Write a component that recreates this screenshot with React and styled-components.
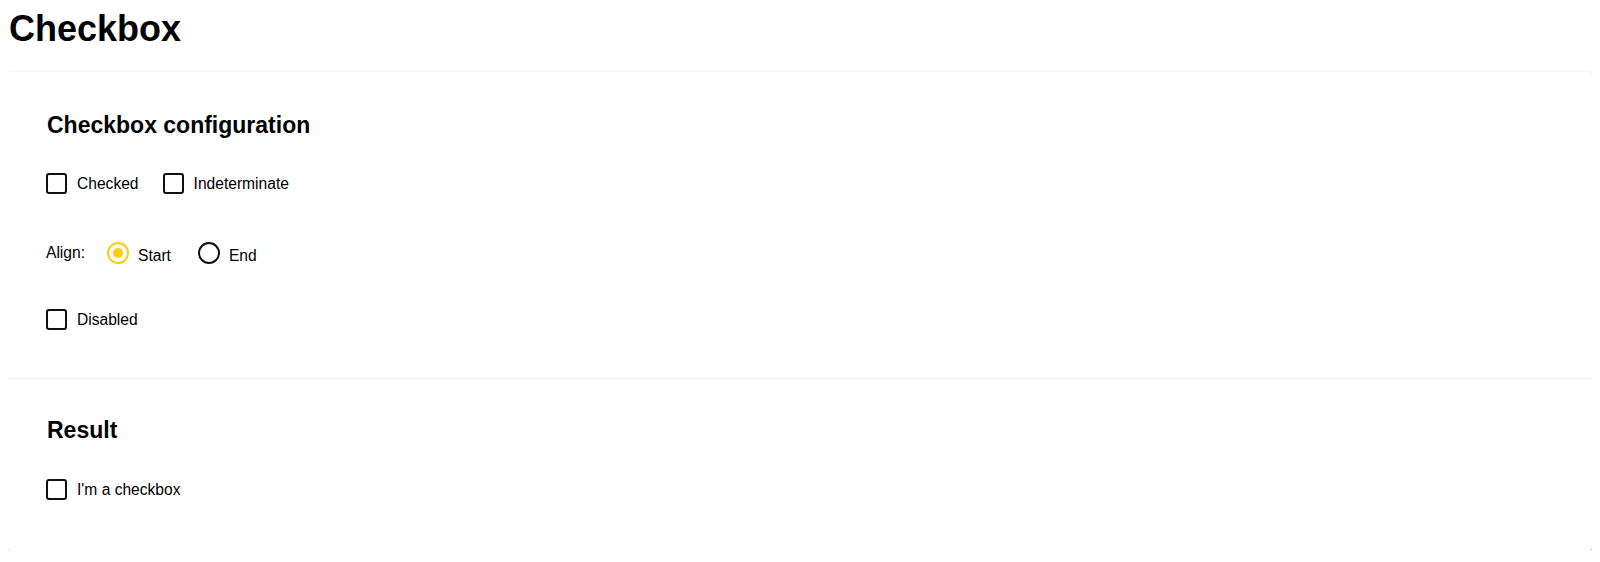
import React, { useState } from 'react';
import styled, { createGlobalStyle } from 'styled-components';

const GlobalStyle = createGlobalStyle`
  body {
    margin: 8px;
    font-family: "Liberation Sans", Arial, Helvetica, sans-serif;
    color: #000;
    background: #fff;
  }
`;

const Title = styled.h1`
  font-size: 36px;
  line-height: 41px;
  font-weight: bold;
  margin: 0 0 23px 1px;
`;

const Card = styled.div`
  background: #fff;
  border-radius: 2px;
  box-shadow: 1px 1px 1px rgba(0, 0, 0, 0.28), 0 1px 3px rgba(0, 0, 0, 0.22),
    0 0 2px rgba(0, 0, 0, 0.06);
`;

const Section = styled.section`
  padding: ${(props) => props.pad};
  border-top: ${(props) => (props.divided ? '1px solid #f0f0f0' : 'none')};
`;

const SectionTitle = styled.h2`
  font-size: 23px;
  line-height: 26px;
  font-weight: bold;
  margin: 0 0 ${(props) => props.after || 35}px 1px;
`;

const Row = styled.div`
  display: flex;
  align-items: center;
  gap: ${(props) => props.gap || 24}px;
  margin-bottom: ${(props) => props.spacing || 0}px;
`;

const CheckLabel = styled.label`
  display: flex;
  align-items: center;
  gap: 10px;
  font-size: 15.6px;
  cursor: pointer;
  user-select: none;
`;

const Box = styled.span`
  width: 21px;
  height: 21px;
  box-sizing: border-box;
  border: 2px solid #111;
  border-radius: 3px;
  display: flex;
  align-items: center;
  justify-content: center;
  background: #fff;
`;

const Mark = styled.span`
  width: 9px;
  height: 2px;
  background: #111;
`;

const AlignText = styled.span`
  font-size: 15.6px;
`;

const RadioLabel = styled.label`
  display: flex;
  align-items: center;
  gap: 9px;
  font-size: 15.6px;
  cursor: pointer;
  user-select: none;
`;

const RadioText = styled.span`
  padding-top: 6px;
`;

const Ring = styled.span`
  width: 22px;
  height: 22px;
  box-sizing: border-box;
  border-radius: 50%;
  border: 2px solid ${(props) => (props.on ? '#fdcc0d' : '#111')};
  display: flex;
  align-items: center;
  justify-content: center;
`;

const Dot = styled.span`
  width: 10px;
  height: 10px;
  border-radius: 50%;
  background: #fdcc0d;
`;

const Checkbox = ({ label, checked, indeterminate, onToggle }) => (
  <CheckLabel onClick={onToggle}>
    <Box>
      {indeterminate ? <Mark /> : null}
      {checked && !indeterminate ? (
        <svg width="13" height="13" viewBox="0 0 13 13">
          <path d="M2 6.5l3 3 6-6" fill="none" stroke="#111" strokeWidth="2" />
        </svg>
      ) : null}
    </Box>
    <span>{label}</span>
  </CheckLabel>
);

const Radio = ({ label, on, onPick }) => (
  <RadioLabel onClick={onPick}>
    <Ring on={on}>{on ? <Dot /> : null}</Ring>
    <RadioText>{label}</RadioText>
  </RadioLabel>
);

const App = () => {
  const [align, setAlign] = useState('start');

  return (
    <>
      <GlobalStyle />
      <Title>Checkbox</Title>
      <Card>
        <Section pad="40px 38px 48px">
          <SectionTitle>Checkbox configuration</SectionTitle>
          <Row spacing={47}>
            <Checkbox label="Checked" />
            <Checkbox label="Indeterminate" />
          </Row>
          <Row spacing={44} gap={22}>
            <AlignText>Align:</AlignText>
            <Row gap={27}>
              <Radio label="Start" on={align === 'start'} onPick={() => setAlign('start')} />
              <Radio label="End" on={align === 'end'} onPick={() => setAlign('end')} />
            </Row>
          </Row>
          <Row>
            <Checkbox label="Disabled" />
          </Row>
        </Section>
        <Section divided pad="38px 38px 50px">
          <SectionTitle after={36}>Result</SectionTitle>
          <Row>
            <Checkbox label="I'm a checkbox" />
          </Row>
        </Section>
      </Card>
    </>
  );
};

export default App;
